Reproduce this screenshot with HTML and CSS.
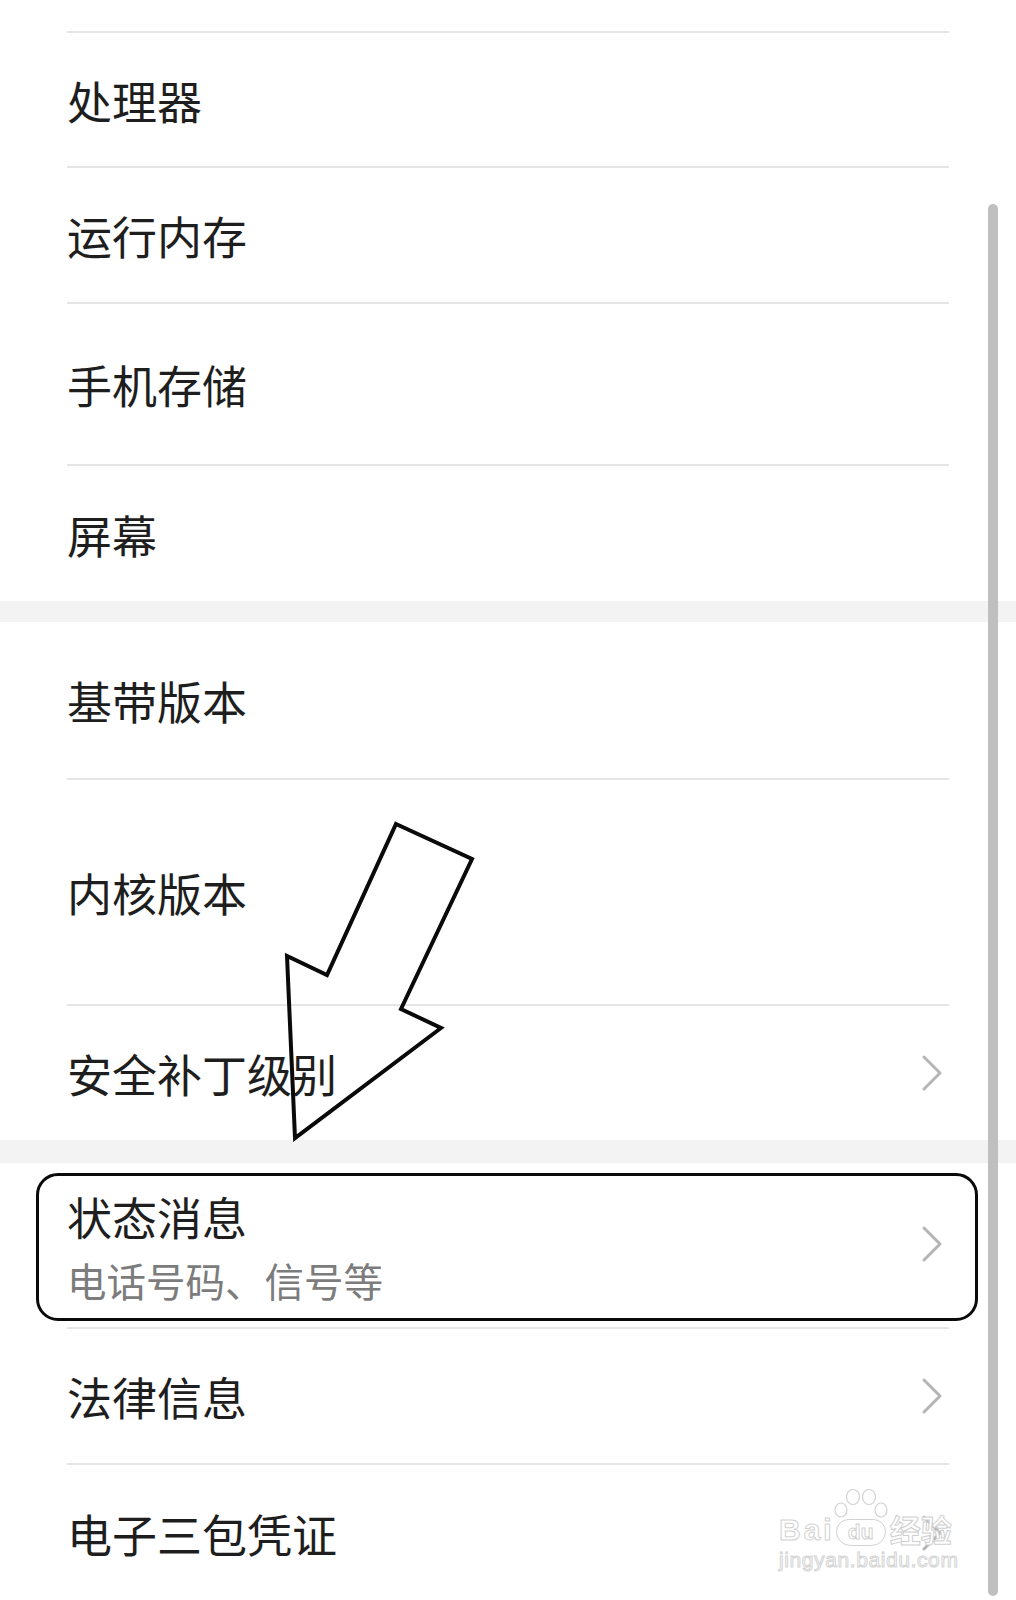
FILE: index.html
```html
<!DOCTYPE html>
<html lang="zh-CN">
<head>
<meta charset="utf-8">
<title>关于手机</title>
<link rel="stylesheet" href="styles.css">
</head>
<body>
<div class="page">
  <div class="group">
    <div class="row row-top"></div>
    <div class="row h135"><span class="label">处理器</span></div>
    <div class="row h136"><span class="label">运行内存</span></div>
    <div class="row h162"><span class="label">手机存储</span></div>
    <div class="row h137"><span class="label">屏幕</span></div>
  </div>
  <div class="band b21"></div>
  <div class="group">
    <div class="row h156"><span class="label">基带版本</span></div>
    <div class="row h226"><span class="label">内核版本</span></div>
    <div class="row h136"><span class="label">安全补丁级别</span><svg class="chev" viewBox="0 0 22 38"><path d="M3 3 L19 19 L3 35"/></svg></div>
  </div>
  <div class="band b23"></div>
  <div class="group">
    <div class="row h164 row-two">
      <div class="texts">
        <span class="label">状态消息</span>
        <span class="sub">电话号码、信号等</span>
      </div>
      <svg class="chev" viewBox="0 0 22 38"><path d="M3 3 L19 19 L3 35"/></svg>
    </div>
    <div class="row h136"><span class="label">法律信息</span><svg class="chev" viewBox="0 0 22 38"><path d="M3 3 L19 19 L3 35"/></svg></div>
    <div class="row h137"><span class="label">电子三包凭证</span><svg class="chev" viewBox="0 0 22 38"><path d="M3 3 L19 19 L3 35"/></svg></div>
  </div>

  <div class="scrollbar"></div>
  <div class="highlight"></div>
  <svg class="arrow" viewBox="0 0 1016 1600" width="1016" height="1600">
    <polygon points="396,824 472,859 401,1009 441,1028 295,1138 287,956 327,975"/>
  </svg>

  <div class="watermark">
    <div class="wm-top">
      <span class="wm-bai">Bai</span>
      <span class="wm-paw">
        <svg class="wm-toes" viewBox="0 0 56 34">
          <ellipse cx="8" cy="22" rx="6" ry="7"/>
          <ellipse cx="20" cy="9" rx="6.5" ry="7.5"/>
          <ellipse cx="36" cy="9" rx="6.5" ry="7.5"/>
          <ellipse cx="48" cy="22" rx="6" ry="7"/>
        </svg>
        <span class="wm-du">du</span>
      </span>
      <span class="wm-jy">经验</span>
    </div>
    <div class="wm-url">jingyan.baidu.com</div>
  </div>
</div>
</body>
</html>
```

FILE: styles.css
```css
html, body {
  margin: 0;
  padding: 0;
  background: #ffffff;
}

.page {
  position: relative;
  width: 1016px;
  height: 1600px;
  overflow: hidden;
  background: #ffffff;
  font-family: "Noto Sans CJK SC", "Noto Sans", sans-serif;
  color: #1e1e1e;
}

.group {
  display: flex;
  flex-direction: column;
}

.row {
  box-sizing: border-box;
  margin: 0 67px;
  display: flex;
  align-items: center;
  justify-content: space-between;
  border-top: 2px solid #e6e6e6;
  padding-right: 6px;
}

.row-top {
  height: 31px;
  border-top: none;
}

.group .row:first-child {
  border-top: none;
}

.h135 { height: 135px; }
.h136 { height: 136px; }
.h137 { height: 137px; }
.h156 { height: 156px; }
.h162 { height: 162px; }
.h164 { height: 164px; }
.h226 { height: 226px; }

.label {
  font-size: 45px;
  line-height: 56px;
  font-weight: 400;
  color: #1e1e1e;
  padding-top: 2px;
}

.row-two {
  align-items: flex-start;
}

.row-two .chev {
  align-self: center;
  margin-top: -2px;
}

.texts {
  display: flex;
  flex-direction: column;
  padding-top: 24px;
  gap: 11px;
}

.sub {
  font-size: 39.5px;
  line-height: 48px;
  color: #7c7c7c;
}

.chev {
  width: 22px;
  height: 38px;
  flex: none;
}

.chev path {
  fill: none;
  stroke: #b5b5b5;
  stroke-width: 3;
  stroke-linecap: round;
  stroke-linejoin: round;
}

.band {
  background: #f3f3f3;
}

.b21 { height: 21px; }
.b23 { height: 23px; }

.scrollbar {
  position: absolute;
  left: 988px;
  top: 204px;
  width: 10px;
  height: 1392px;
  border-radius: 5px;
  background: #bfbfbf;
}

.highlight {
  position: absolute;
  left: 36px;
  top: 1173px;
  width: 942px;
  height: 148px;
  box-sizing: border-box;
  border: 3px solid #0a0a0a;
  border-radius: 22px;
}

.arrow {
  position: absolute;
  left: 0;
  top: 0;
  pointer-events: none;
}

.arrow polygon {
  fill: none;
  stroke: #0a0a0a;
  stroke-width: 4;
  stroke-linejoin: miter;
}

.watermark {
  position: absolute;
  left: 779px;
  top: 1488px;
  width: 184px;
  display: flex;
  flex-direction: column;
  align-items: flex-start;
}

.wm-top {
  display: flex;
  align-items: flex-end;
  height: 58px;
}

.wm-bai {
  font-family: "Liberation Sans", Arial, sans-serif;
  font-weight: 700;
  font-size: 30px;
  line-height: 28px;
  letter-spacing: 3px;
  color: #ffffff;
  -webkit-text-stroke: 1px #d2d2d2;
  margin-bottom: 2px;
}

.wm-paw {
  position: relative;
  width: 56px;
  height: 58px;
  display: flex;
  align-items: flex-end;
  justify-content: center;
  margin: 0 1px 0 -2px;
}

.wm-toes {
  position: absolute;
  left: 0;
  top: 0;
  width: 56px;
  height: 34px;
}

.wm-toes ellipse {
  fill: #ffffff;
  stroke: #d2d2d2;
  stroke-width: 1.2;
}

.wm-du {
  box-sizing: border-box;
  width: 50px;
  height: 27px;
  border: 1.2px solid #d2d2d2;
  border-radius: 13px 13px 15px 15px;
  font-family: "Liberation Sans", Arial, sans-serif;
  font-weight: 700;
  font-size: 21px;
  line-height: 24px;
  text-align: center;
  color: #ffffff;
  -webkit-text-stroke: 1px #d2d2d2;
  background: #ffffff;
}

.wm-jy {
  font-family: "Noto Sans CJK SC", sans-serif;
  font-weight: 700;
  font-size: 31px;
  line-height: 34px;
  color: #ffffff;
  -webkit-text-stroke: 1px #cfcfcf;
}

.wm-url {
  margin-top: 2px;
  font-family: "Liberation Sans", Arial, sans-serif;
  font-size: 21px;
  line-height: 24px;
  letter-spacing: 0.6px;
  color: #ffffff;
  -webkit-text-stroke: 1px #d4d4d4;
}
```
